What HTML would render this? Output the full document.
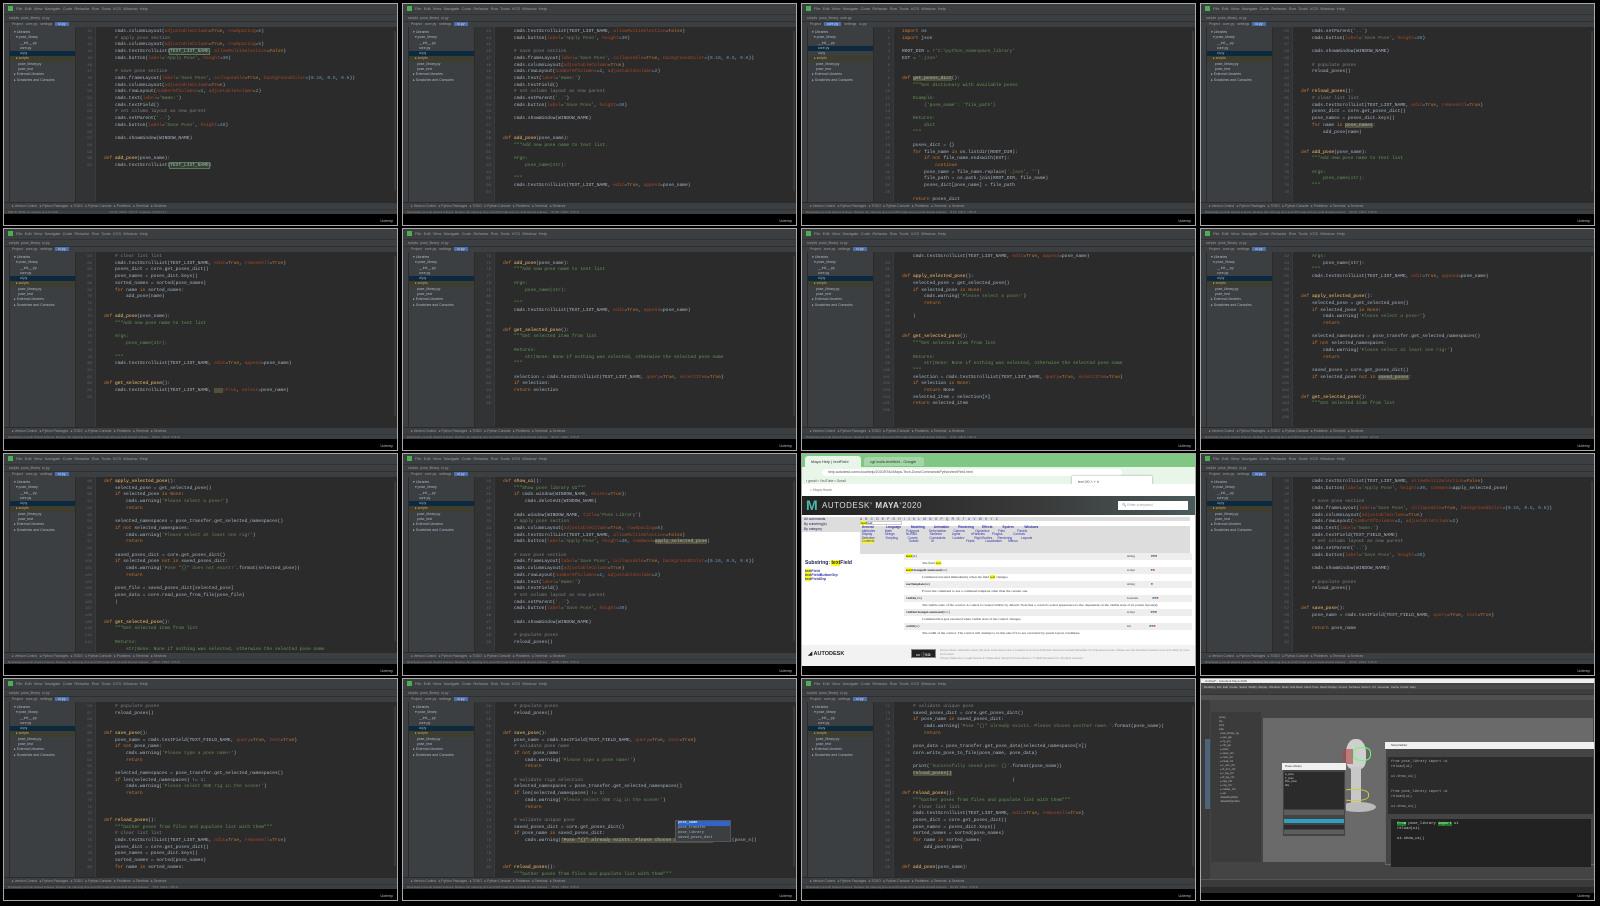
<!DOCTYPE html>
<html><head><meta charset="utf-8">
<style>
*{margin:0;padding:0;box-sizing:border-box}
body{width:1600px;height:906px;background:#000;position:relative;overflow:hidden;font-family:"Liberation Sans",sans-serif}
.c{position:absolute;width:395px;height:223px;border:1px solid #a8a8a8;background:#000;overflow:hidden}
.mb{position:absolute;left:0;top:0;width:100%;height:10px;background:#3c3f41;color:#9a9a9a;font-size:4px;line-height:10px;padding-left:4px;white-space:pre}
.mb b{display:inline-block;width:5px;height:5px;background:#4caf50;margin-right:3px;vertical-align:middle}
.nb{position:absolute;left:0;top:10px;width:100%;height:7px;background:#3c3f41;border-top:1px solid #323232;color:#999;font-size:3.5px;line-height:6px;padding-left:5px;white-space:pre}
.nb i{position:absolute;top:1px;width:4px;height:4px;border-radius:2px}
.tb{position:absolute;left:0;top:17px;width:100%;height:6px;background:#3c3f41;border-top:1px solid #2f2f2f;font-size:3.5px;line-height:5px;color:#999;padding-left:8px;white-space:pre}
.tb span{background:#4b6eaf;color:#ddd;padding:0 3px}
.ls{position:absolute;left:0;top:23px;width:6px;height:175px;background:#3c3f41;border-right:1px solid #2b2b2b}
.pp{position:absolute;left:6px;top:23px;width:66px;height:175px;background:#3c3f41;border-right:1px solid #2b2b2b;font-size:3.5px;line-height:5.3px;color:#a9b7c6;white-space:pre;padding-top:3px}
.pp div{padding-left:4px;height:5.3px}
.pp .sel{background:#0d293e}
.pp .hl{background:#3e3e30;color:#c9a56c}
.gt{position:absolute;left:72px;top:23px;width:20px;height:175px;background:#313335;border-right:1px solid #3a3a3a;color:#606366;font:4px/6.7px "Liberation Mono",monospace;text-align:right;padding-right:3px;padding-top:2px;white-space:pre}
.ed{position:absolute;left:92px;top:23px;width:303px;height:175px;background:#2b2b2b;overflow:hidden}
.ed pre{position:absolute;left:8px;top:2px;font:4.6px/6.7px "Liberation Mono",monospace;color:#a9b7c6}
.ed .sb{position:absolute;right:3px;top:4px;width:2px;height:160px;background:#3a3a3a}
.k{color:#cc7832}.s{color:#6a8759}.f{color:#ffc66d}.m{color:#808080}.p{color:#aa4926}.n{color:#6897bb}.g{background:#344134;color:#a9b7c6;outline:0.5px solid #5a7a5a}.d{color:#629755}.y{background:#52503a}
.bt{position:absolute;left:0;top:198px;width:100%;height:7px;background:#3c3f41;border-top:1px solid #2b2b2b;color:#999;font-size:3.3px;line-height:6px;padding-left:8px;white-space:pre}
.st{position:absolute;left:0;top:205px;width:100%;height:5px;background:#3c3f41;border-top:1px solid #333;color:#888;font-size:3px;line-height:4px;padding-left:4px;white-space:pre}
.ud{position:absolute;right:4px;bottom:2px;color:#bbb;font-size:4px}
</style></head><body>

<!-- ROW 0 -->
<div class="c" style="left:3px;top:3px">
<div class="mb"><b></b>File  Edit  View  Navigate  Code  Refactor  Run  Tools  VCS  Window  Help</div>
<div class="nb">scripts  pose_library  ui.py</div>
<div class="tb">Project   core.py   settings   <span>ui.py</span></div>
<div class="ls"></div>
<div class="pp"><div>▾ Libraries</div><div>  ▾ pose_library</div><div>      __init__.py</div><div>      core.py</div><div class="sel">      ui.py</div><div class="hl">  ▸ scripts</div><div>    pose_library.py</div><div>    pose_test</div><div>▸ External Libraries</div><div>▸ Scratches and Consoles</div></div>
<div class="gt">41
42
43
44
45
46
47
48
49
50
51
52
53
54
55
56
57
58
59
60
61</div>
<div class="ed"><div class="sb"></div><pre>    cmds.columnLayout(<span class="p">adjustableColumn</span>=<span class="k">True</span>, <span class="p">rowSpacing</span>=<span class="n">5</span>)
    <span class="m"># apply pose section</span>
    cmds.columnLayout(<span class="p">adjustableColumn</span>=<span class="k">True</span>, <span class="p">rowSpacing</span>=<span class="n">5</span>)
    cmds.textScrollList(<span class="g">TEXT_LIST_NAME</span>, <span class="p">allowMultiSelection</span>=<span class="k">False</span>)
    cmds.button(<span class="p">label</span>=<span class="s">'Apply Pose'</span>, <span class="p">height</span>=<span class="n">30</span>)

    <span class="m"># save pose section</span>
    cmds.frameLayout(<span class="p">label</span>=<span class="s">'Save Pose'</span>, <span class="p">collapsable</span>=<span class="k">True</span>, <span class="p">backgroundColor</span>=(<span class="n">0.16</span>, <span class="n">0.5</span>, <span class="n">0.6</span>))
    cmds.columnLayout(<span class="p">adjustableColumn</span>=<span class="k">True</span>)
    cmds.rowLayout(<span class="p">numberOfColumns</span>=<span class="n">2</span>, <span class="p">adjustableColumn</span>=<span class="n">2</span>)
    cmds.text(<span class="p">label</span>=<span class="s">'Name:'</span>)
    cmds.textField()
    <span class="m"># set column layout as new parent</span>
    cmds.setParent(<span class="s">'..'</span>)
    cmds.button(<span class="p">label</span>=<span class="s">'Save Pose'</span>, <span class="p">height</span>=<span class="n">30</span>)

    cmds.showWindow(WINDOW_NAME)


<span class="k">def</span> <span class="f">add_pose</span>(pose_name):
    cmds.textScrollList(<span class="g">TEXT_LIST_NAME</span>)</pre></div>
<div class="bt">▸ Version Control   ▸ Python Packages   ▸ TODO   ▸ Python Console   ▸ Problems   ▸ Terminal   ▸ Services</div>
<div class="st">PEP 8: W292 no newline at end of file                                                              61:36  CRLF  UTF-8  4 spaces  Python 3.7</div>
<div class="ud">Udemy</div></div>

<div class="c" style="left:402px;top:3px">
<div class="mb"><b></b>File  Edit  View  Navigate  Code  Refactor  Run  Tools  VCS  Window  Help</div>
<div class="nb">scripts  pose_library  ui.py</div>
<div class="tb">Project   core.py   settings   <span>ui.py</span></div>
<div class="ls"></div>
<div class="pp"><div>▾ Libraries</div><div>  ▾ pose_library</div><div>      __init__.py</div><div>      core.py</div><div class="sel">      ui.py</div><div class="hl">  ▸ scripts</div><div>    pose_library.py</div><div>    pose_test</div><div>▸ External Libraries</div><div>▸ Scratches and Consoles</div></div>
<div class="gt">43
44
45
46
47
48
49
50
51
52
53
54
55
56
57
58
59
60
61
62
63
64
65
66
67</div>
<div class="ed"><div class="sb"></div><pre>    cmds.textScrollList(TEXT_LIST_NAME, <span class="p">allowMultiSelection</span>=<span class="k">False</span>)
    cmds.button(<span class="p">label</span>=<span class="s">'Apply Pose'</span>, <span class="p">height</span>=<span class="n">30</span>)

    <span class="m"># save pose section</span>
    cmds.frameLayout(<span class="p">label</span>=<span class="s">'Save Pose'</span>, <span class="p">collapsable</span>=<span class="k">True</span>, <span class="p">backgroundColor</span>=(<span class="n">0.16</span>, <span class="n">0.5</span>, <span class="n">0.6</span>))
    cmds.columnLayout(<span class="p">adjustableColumn</span>=<span class="k">True</span>)
    cmds.rowLayout(<span class="p">numberOfColumns</span>=<span class="n">2</span>, <span class="p">adjustableColumn</span>=<span class="n">2</span>)
    cmds.text(<span class="p">label</span>=<span class="s">'Name:'</span>)
    cmds.textField()
    <span class="m"># set column layout as new parent</span>
    cmds.setParent(<span class="s">'..'</span>)
    cmds.button(<span class="p">label</span>=<span class="s">'Save Pose'</span>, <span class="p">height</span>=<span class="n">30</span>)

    cmds.showWindow(WINDOW_NAME)


<span class="k">def</span> <span class="f">add_pose</span>(pose_name):
    <span class="d">"""Add new pose name to text list.</span>

<span class="d">    Args:</span>
<span class="d">        pose_name(str):</span>

<span class="d">    """</span>
    cmds.textScrollList(TEXT_LIST_NAME, <span class="p">edit</span>=<span class="k">True</span>, <span class="p">append</span>=pose_name)</pre></div>
<div class="bt">▸ Version Control   ▸ Python Packages   ▸ TODO   ▸ Python Console   ▸ Problems   ▸ Terminal   ▸ Services</div>
<div class="st">Download pre-built shared indexes: Reduce the indexing time and CPU load with pre-built shared indexes     61:36  CRLF  UTF-8</div>
<div class="ud">Udemy</div></div>

<div class="c" style="left:801px;top:3px">
<div class="mb"><b></b>File  Edit  View  Navigate  Code  Refactor  Run  Tools  VCS  Window  Help</div>
<div class="nb">scripts  pose_library  core.py</div>
<div class="tb">Project   <span>core.py</span>   settings   ui.py</div>
<div class="ls"></div>
<div class="pp"><div>▾ Libraries</div><div>  ▾ pose_library</div><div>      __init__.py</div><div class="sel">      core.py</div><div>      ui.py</div><div class="hl">  ▸ scripts</div><div>    pose_library.py</div><div>    pose_test</div><div>▸ External Libraries</div><div>▸ Scratches and Consoles</div></div>
<div class="gt">1
2
3
4
5
6
7
8
9
10
11
12
13
14
15
16
17
18
19
20
21
22
23
24
25</div>
<div class="ed"><div class="sb"></div><pre><span class="k">import</span> os
<span class="k">import</span> json

ROOT_DIR = <span class="s">r'C:\python_namespace_library'</span>
EXT = <span class="s">'.json'</span>


<span class="k">def</span> <span class="y">get_poses_dict</span>():
    <span class="d">"""Get dictionary with available poses</span>

<span class="d">    Example:</span>
<span class="d">        {'pose_name': 'file_path'}</span>

<span class="d">    Returns:</span>
<span class="d">        dict</span>
<span class="d">    """</span>

    poses_dict = {}
    <span class="k">for</span> file_name <span class="k">in</span> os.listdir(ROOT_DIR):
        <span class="k">if not</span> file_name.endswith(EXT):
            <span class="k">continue</span>
        pose_name = file_name.replace(<span class="s">'.json'</span>, <span class="s">''</span>)
        file_path = os.path.join(ROOT_DIR, file_name)
        poses_dict[pose_name] = file_path

    <span class="k">return</span> poses_dict</pre></div>
<div class="bt">▸ Version Control   ▸ Python Packages   ▸ TODO   ▸ Python Console   ▸ Problems   ▸ Terminal   ▸ Services</div>
<div class="st">Download pre-built shared indexes: Reduce the indexing time and CPU load with pre-built shared indexes     8:19  CRLF  UTF-8</div>
<div class="ud">Udemy</div></div>

<div class="c" style="left:1200px;top:3px">
<div class="mb"><b></b>File  Edit  View  Navigate  Code  Refactor  Run  Tools  VCS  Window  Help</div>
<div class="nb">scripts  pose_library  ui.py</div>
<div class="tb">Project   core.py   settings   <span>ui.py</span></div>
<div class="ls"></div>
<div class="pp"><div>▾ Libraries</div><div>  ▾ pose_library</div><div>      __init__.py</div><div>      core.py</div><div class="sel">      ui.py</div><div class="hl">  ▸ scripts</div><div>    pose_library.py</div><div>    pose_test</div><div>▸ External Libraries</div><div>▸ Scratches and Consoles</div></div>
<div class="gt">55
56
57
58
59
60
61
62
63
64
65
66
67
68
69
70
71
72
73
74
75
76
77
78
79</div>
<div class="ed"><div class="sb"></div><pre>    cmds.setParent(<span class="s">'..'</span>)
    cmds.button(<span class="p">label</span>=<span class="s">'Save Pose'</span>, <span class="p">height</span>=<span class="n">30</span>)

    cmds.showWindow(WINDOW_NAME)

    <span class="m"># populate poses</span>
    reload_poses()


<span class="k">def</span> <span class="f">reload_poses</span>():
    <span class="m"># clear list list</span>
    cmds.textScrollList(TEXT_LIST_NAME, <span class="p">edit</span>=<span class="k">True</span>, <span class="p">removeAll</span>=<span class="k">True</span>)
    poses_dict = core.get_poses_dict()
    pose_names = poses_dict.keys()
    <span class="k">for</span> name <span class="k">in</span> <span class="y">pose_names</span>:
        add_pose(name)


<span class="k">def</span> <span class="f">add_pose</span>(pose_name):
    <span class="d">"""Add new pose name to text list</span>

<span class="d">    Args:</span>
<span class="d">        pose_name(str):</span>
<span class="d">    """</span></pre></div>
<div class="bt">▸ Version Control   ▸ Python Packages   ▸ TODO   ▸ Python Console   ▸ Problems   ▸ Terminal   ▸ Services</div>
<div class="st">Download pre-built shared indexes: Reduce the indexing time and CPU load with pre-built shared indexes     69:30  CRLF  UTF-8</div>
<div class="ud">Udemy</div></div>

<!-- ROW 1 -->
<div class="c" style="left:3px;top:228px">
<div class="mb"><b></b>File  Edit  View  Navigate  Code  Refactor  Run  Tools  VCS  Window  Help</div>
<div class="nb">scripts  pose_library  ui.py</div>
<div class="tb">Project   core.py   settings   <span>ui.py</span></div>
<div class="ls"></div>
<div class="pp"><div>▾ Libraries</div><div>  ▾ pose_library</div><div>      __init__.py</div><div>      core.py</div><div class="sel">      ui.py</div><div class="hl">  ▸ scripts</div><div>    pose_library.py</div><div>    pose_test</div><div>▸ External Libraries</div><div>▸ Scratches and Consoles</div></div>
<div class="gt">64
65
66
67
68
69
70
71
72
73
74
75
76
77
78
79
80
81
82
83
84
85</div>
<div class="ed"><div class="sb"></div><pre>    <span class="m"># clear list list</span>
    cmds.textScrollList(TEXT_LIST_NAME, <span class="p">edit</span>=<span class="k">True</span>, <span class="p">removeAll</span>=<span class="k">True</span>)
    poses_dict = core.get_poses_dict()
    pose_names = poses_dict.keys()
    sorted_names = sorted(pose_names)
    <span class="k">for</span> name <span class="k">in</span> sorted_names:
        add_pose(name)


<span class="k">def</span> <span class="f">add_pose</span>(pose_name):
    <span class="d">"""Add new pose name to text list</span>

<span class="d">    Args:</span>
<span class="d">        pose_name(str):</span>

<span class="d">    """</span>
    cmds.textScrollList(TEXT_LIST_NAME, <span class="p">edit</span>=<span class="k">True</span>, <span class="p">append</span>=pose_name)


<span class="k">def</span> <span class="f">get_selected_pose</span>():
    cmds.textScrollList(TEXT_LIST_NAME, <span class="y">   </span><span class="p">=True</span>, <span class="p">select</span>=pose_name)</pre></div>
<div class="bt">▸ Version Control   ▸ Python Packages   ▸ TODO   ▸ Python Console   ▸ Problems   ▸ Terminal   ▸ Services</div>
<div class="st">Download pre-built shared indexes: Reduce the indexing time and CPU load with pre-built shared indexes     85:41  CRLF  UTF-8</div>
<div class="ud">Udemy</div></div>

<div class="c" style="left:402px;top:228px">
<div class="mb"><b></b>File  Edit  View  Navigate  Code  Refactor  Run  Tools  VCS  Window  Help</div>
<div class="nb">scripts  pose_library  ui.py</div>
<div class="tb">Project   core.py   settings   <span>ui.py</span></div>
<div class="ls"></div>
<div class="pp"><div>▾ Libraries</div><div>  ▾ pose_library</div><div>      __init__.py</div><div>      core.py</div><div class="sel">      ui.py</div><div class="hl">  ▸ scripts</div><div>    pose_library.py</div><div>    pose_test</div><div>▸ External Libraries</div><div>▸ Scratches and Consoles</div></div>
<div class="gt">74
75
76
77
78
79
80
81
82
83
84
85
86
87
88
89
90
91
92
93
94
95
96</div>
<div class="ed"><div class="sb"></div><pre>

<span class="k">def</span> <span class="f">add_pose</span>(pose_name):
    <span class="d">"""Add new pose name to text list</span>

<span class="d">    Args:</span>
<span class="d">        pose_name(str):</span>

<span class="d">    """</span>
    cmds.textScrollList(TEXT_LIST_NAME, <span class="p">edit</span>=<span class="k">True</span>, <span class="p">append</span>=pose_name)


<span class="k">def</span> <span class="f">get_selected_pose</span>():
    <span class="d">"""Get selected item from list</span>

<span class="d">    Returns:</span>
<span class="d">        str|None: None if nothing was selected, otherwise the selected pose name</span>
<span class="d">    """</span>

    selection = cmds.textScrollList(TEXT_LIST_NAME, <span class="p">query</span>=<span class="k">True</span>, <span class="p">selectItem</span>=<span class="k">True</span>)
    <span class="k">if</span> selection:
    <span class="k">return</span> selection</pre></div>
<div class="bt">▸ Version Control   ▸ Python Packages   ▸ TODO   ▸ Python Console   ▸ Problems   ▸ Terminal   ▸ Services</div>
<div class="st">Download pre-built shared indexes: Reduce the indexing time and CPU load with pre-built shared indexes     95:17  CRLF  UTF-8</div>
<div class="ud">Udemy</div></div>

<div class="c" style="left:801px;top:228px">
<div class="mb"><b></b>File  Edit  View  Navigate  Code  Refactor  Run  Tools  VCS  Window  Help</div>
<div class="nb">scripts  pose_library  ui.py</div>
<div class="tb">Project   core.py   settings   <span>ui.py</span></div>
<div class="ls"></div>
<div class="pp"><div>▾ Libraries</div><div>  ▾ pose_library</div><div>      __init__.py</div><div>      core.py</div><div class="sel">      ui.py</div><div class="hl">  ▸ scripts</div><div>    pose_library.py</div><div>    pose_test</div><div>▸ External Libraries</div><div>▸ Scratches and Consoles</div></div>
<div class="gt">
84
85
86
87
88
89
90
91
92
93
94
95
96
97
98
99
100
101
102
103
104
105
106</div>
<div class="ed"><div class="sb"></div><pre>
    cmds.textScrollList(TEXT_LIST_NAME, <span class="p">edit</span>=<span class="k">True</span>, <span class="p">append</span>=pose_name)


<span class="k">def</span> <span class="f">apply_selected_pose</span>():
    selected_pose = get_selected_pose()
    <span class="k">if</span> selected_pose <span class="k">is</span> <span class="k">None</span>:
        cmds.warning(<span class="s">'Please select a pose!'</span>)
        <span class="k">return</span>

    |


<span class="k">def</span> <span class="f">get_selected_pose</span>():
    <span class="d">"""Get selected item from list</span>

<span class="d">    Returns:</span>
<span class="d">        str|None: None if nothing was selected, otherwise the selected pose name</span>
<span class="d">    """</span>
    selection = cmds.textScrollList(TEXT_LIST_NAME, <span class="p">query</span>=<span class="k">True</span>, <span class="p">selectItem</span>=<span class="k">True</span>)
    <span class="k">if</span> selection <span class="k">is</span> <span class="k">None</span>:
        <span class="k">return</span> None
    selected_item = selection[<span class="n">0</span>]
    <span class="k">return</span> selected_item</pre></div>
<div class="bt">▸ Version Control   ▸ Python Packages   ▸ TODO   ▸ Python Console   ▸ Problems   ▸ Terminal   ▸ Services</div>
<div class="st">Download pre-built shared indexes: Reduce the indexing time and CPU load with pre-built shared indexes     94:5  CRLF  UTF-8</div>
<div class="ud">Udemy</div></div>

<div class="c" style="left:1200px;top:228px">
<div class="mb"><b></b>File  Edit  View  Navigate  Code  Refactor  Run  Tools  VCS  Window  Help</div>
<div class="nb">scripts  pose_library  ui.py</div>
<div class="tb">Project   core.py   settings   <span>ui.py</span></div>
<div class="ls"></div>
<div class="pp"><div>▾ Libraries</div><div>  ▾ pose_library</div><div>      __init__.py</div><div>      core.py</div><div class="sel">      ui.py</div><div class="hl">  ▸ scripts</div><div>    pose_library.py</div><div>    pose_test</div><div>▸ External Libraries</div><div>▸ Scratches and Consoles</div></div>
<div class="gt">82
83
84
85
86
87
88
89
90
91
92
93
94
95
96
97
98
99
100
101
102
103
104
105
106</div>
<div class="ed"><div class="sb"></div><pre><span class="d">    Args:</span>
        pose_name(str):
<span class="d">    """</span>
    cmds.textScrollList(TEXT_LIST_NAME, <span class="p">edit</span>=<span class="k">True</span>, <span class="p">append</span>=pose_name)


<span class="k">def</span> <span class="f">apply_selected_pose</span>():
    selected_pose = get_selected_pose()
    <span class="k">if</span> selected_pose <span class="k">is</span> <span class="k">None</span>:
        cmds.warning(<span class="s">'Please select a pose!'</span>)
        <span class="k">return</span>

    selected_namespaces = pose_transfer.get_selected_namespaces()
    <span class="k">if not</span> selected_namespaces:
        cmds.warning(<span class="s">'Please select at least one rig!'</span>)
        <span class="k">return</span>

    saved_poses = core.get_poses_dict()
    <span class="k">if</span> selected_pose <span class="k">not in</span> <span class="y">saved_poses</span>:


<span class="k">def</span> <span class="f">get_selected_pose</span>():
    <span class="d">"""Get selected item from list</span></pre></div>
<div class="bt">▸ Version Control   ▸ Python Packages   ▸ TODO   ▸ Python Console   ▸ Problems   ▸ Terminal   ▸ Services</div>
<div class="st">Download pre-built shared indexes: Reduce the indexing time and CPU load with pre-built shared indexes     101:48  CRLF  UTF-8</div>
<div class="ud">Udemy</div></div>

<!-- ROW 2 -->
<div class="c" style="left:3px;top:453px">
<div class="mb"><b></b>File  Edit  View  Navigate  Code  Refactor  Run  Tools  VCS  Window  Help</div>
<div class="nb">scripts  pose_library  ui.py</div>
<div class="tb">Project   core.py   settings   <span>ui.py</span></div>
<div class="ls"></div>
<div class="pp"><div>▾ Libraries</div><div>  ▾ pose_library</div><div>      __init__.py</div><div>      core.py</div><div class="sel">      ui.py</div><div class="hl">  ▸ scripts</div><div>    pose_library.py</div><div>    pose_test</div><div>▸ External Libraries</div><div>▸ Scratches and Consoles</div></div>
<div class="gt">88
89
90
91
92
93
94
95
96
97
98
99
100
101
102
103
104
105
106
107
108
109
110
111
112</div>
<div class="ed"><div class="sb"></div><pre><span class="k">def</span> <span class="f">apply_selected_pose</span>():
    selected_pose = get_selected_pose()
    <span class="k">if</span> selected_pose <span class="k">is</span> <span class="k">None</span>:
        cmds.warning(<span class="s">'Please select a pose!'</span>)
        <span class="k">return</span>

    selected_namespaces = pose_transfer.get_selected_namespaces()
    <span class="k">if not</span> selected_namespaces:
        cmds.warning(<span class="s">'Please select at least one rig!'</span>)
        <span class="k">return</span>

    saved_poses_dict = core.get_poses_dict()
    <span class="k">if</span> selected_pose <span class="k">not in</span> saved_poses_dict:
        cmds.warning(<span class="s">'Pose "{}" does not exist!'</span>.format(selected_pose))
        <span class="k">return</span>

    pose_file = saved_poses_dict[selected_pose]
    pose_data = core.read_pose_from_file(pose_file)
    |


<span class="k">def</span> <span class="f">get_selected_pose</span>():
    <span class="d">"""Get selected item from list</span>

<span class="d">    Returns:</span>
<span class="d">        str|None: None if nothing was selected, otherwise the selected pose name</span></pre></div>
<div class="bt">▸ Version Control   ▸ Python Packages   ▸ TODO   ▸ Python Console   ▸ Problems   ▸ Terminal   ▸ Services</div>
<div class="st">Download pre-built shared indexes: Reduce the indexing time and CPU load with pre-built shared indexes     106:5  CRLF  UTF-8</div>
<div class="ud">Udemy</div></div>

<div class="c" style="left:402px;top:453px">
<div class="mb"><b></b>File  Edit  View  Navigate  Code  Refactor  Run  Tools  VCS  Window  Help</div>
<div class="nb">scripts  pose_library  ui.py</div>
<div class="tb">Project   core.py   settings   <span>ui.py</span></div>
<div class="ls"></div>
<div class="pp"><div>▾ Libraries</div><div>  ▾ pose_library</div><div>      __init__.py</div><div>      core.py</div><div class="sel">      ui.py</div><div class="hl">  ▸ scripts</div><div>    pose_library.py</div><div>    pose_test</div><div>▸ External Libraries</div><div>▸ Scratches and Consoles</div></div>
<div class="gt">26
27
28
29
30
31
32
33
34
35
36
37
38
39
40
41
42
43
44
45
46
47
48
49
50</div>
<div class="ed"><div class="sb"></div><pre><span class="k">def</span> <span class="f">show_ui</span>():
    <span class="d">"""Show pose library UI"""</span>
    <span class="k">if</span> cmds.window(WINDOW_NAME, <span class="p">exists</span>=<span class="k">True</span>):
        cmds.deleteUI(WINDOW_NAME)

    cmds.window(WINDOW_NAME, <span class="p">title</span>=<span class="s">'Pose Library'</span>)
    <span class="m"># apply pose section</span>
    cmds.columnLayout(<span class="p">adjustableColumn</span>=<span class="k">True</span>, <span class="p">rowSpacing</span>=<span class="n">5</span>)
    cmds.textScrollList(TEXT_LIST_NAME, <span class="p">allowMultiSelection</span>=<span class="k">False</span>)
    cmds.button(<span class="p">label</span>=<span class="s">'Apply Pose'</span>, <span class="p">height</span>=<span class="n">30</span>, <span class="p">command</span>=<span class="y">apply_selected_pose</span>)

    <span class="m"># save pose section</span>
    cmds.frameLayout(<span class="p">label</span>=<span class="s">'Save Pose'</span>, <span class="p">collapsable</span>=<span class="k">True</span>, <span class="p">backgroundColor</span>=(<span class="n">0.16</span>, <span class="n">0.5</span>, <span class="n">0.6</span>))
    cmds.columnLayout(<span class="p">adjustableColumn</span>=<span class="k">True</span>)
    cmds.rowLayout(<span class="p">numberOfColumns</span>=<span class="n">2</span>, <span class="p">adjustableColumn</span>=<span class="n">2</span>)
    cmds.text(<span class="p">label</span>=<span class="s">'Name:'</span>)
    cmds.textField()
    <span class="m"># set column layout as new parent</span>
    cmds.setParent(<span class="s">'..'</span>)
    cmds.button(<span class="p">label</span>=<span class="s">'Save Pose'</span>, <span class="p">height</span>=<span class="n">30</span>)

    cmds.showWindow(WINDOW_NAME)

    <span class="m"># populate poses</span>
    reload_poses()</pre></div>
<div class="bt">▸ Version Control   ▸ Python Packages   ▸ TODO   ▸ Python Console   ▸ Problems   ▸ Terminal   ▸ Services</div>
<div class="st">Download pre-built shared indexes: Reduce the indexing time and CPU load with pre-built shared indexes     35:99  CRLF  UTF-8</div>
<div class="ud">Udemy</div></div>

<!-- Browser cell -->
<div class="c" style="left:801px;top:453px;background:#fff">
<div style="position:absolute;left:0;top:0;width:100%;height:13px;background:#81c784"></div>
<div style="position:absolute;left:3px;top:2px;width:56px;height:11px;background:#e8f5e9;border-radius:3px 3px 0 0;font-size:4px;line-height:11px;padding-left:6px;color:#333">Maya Help | textField</div>
<div style="position:absolute;left:62px;top:3px;width:60px;height:9px;background:#a5d6a7;border-radius:3px 3px 0 0;font-size:4px;line-height:9px;padding-left:6px;color:#333">cgf.tools.textfield - Google Search</div>
<div style="position:absolute;left:0;top:13px;width:100%;height:11px;background:#e8f5e9"></div>
<div style="position:absolute;left:20px;top:15px;width:300px;height:7px;background:#fff;border-radius:4px;font-size:3.6px;line-height:7px;padding-left:6px;color:#555">help.autodesk.com/cloudhelp/2020/ENU/Maya-Tech-Docs/CommandsPython/textField.html</div>
<div style="position:absolute;left:0;top:24px;width:100%;height:6px;background:#e8f5e9;font-size:3.5px;line-height:6px;padding-left:4px;color:#555">▪ gmail   ▪ YouTube   ▪ Gmail</div>
<div style="position:absolute;left:270px;top:22px;width:80px;height:12px;background:#fff;box-shadow:0 0 2px #999;font-size:3.5px;line-height:12px;padding-left:6px;color:#555">text                 0/0    ˄ ˅ ✕</div>
<div style="position:absolute;left:0;top:30px;width:100%;height:12px;background:#fff;font-size:3.5px;line-height:12px;padding-left:8px;color:#777">⌂ Maya Home</div>
<div style="position:absolute;left:0;top:42px;width:100%;height:19px;background:linear-gradient(90deg,#222 0%,#3a3a3a 60%,#4a5a5a 100%)"></div>
<div style="position:absolute;left:4px;top:44px;font:bold 14px/15px 'Liberation Sans',sans-serif;color:#4db6ac">M</div>
<div style="position:absolute;left:20px;top:47px;font-size:8px;color:#ddd;letter-spacing:0.5px">AUTODESK<sup style="font-size:3px">®</sup> <b>MAYA</b><sup style="font-size:3px">®</sup>2020</div>
<div style="position:absolute;left:316px;top:47px;width:70px;height:9px;background:#fff;font-size:3.5px;line-height:9px;padding-left:4px;color:#999">🔍 Enter a keyword</div>
<div style="position:absolute;left:0;top:61px;width:100%;height:60px;background:#fff"></div>
<div style="position:absolute;left:0;top:63px;width:58px;font-size:3.4px;line-height:5px;color:#225;padding-left:2px;background:#ddd">All commands<br>By substring(s)<br>By category</div>
<div style="position:absolute;left:58px;top:63px;width:330px;height:4px;background:#ddd;font-size:3.2px;line-height:4px;color:#33a;letter-spacing:1.2px">A B C D E F G H I J K L M N O P Q R S T U V W X Y Z</div>
<div style="position:absolute;left:58px;top:67px;width:42px;height:4px;background:#fff;border:0.5px solid #ccc;font-size:3px;line-height:3px"><span style="background:#ff0">text</span>Field</div>
<div style="position:absolute;left:58px;top:72px;width:330px;height:28px;background:#ddd;font-size:3.2px;line-height:3.6px;color:#33a;white-space:pre">  <b>General</b>              <b>Language</b>           <b>Modeling</b>          <b>Animation</b>          <b>Rendering</b>         <b>Effects</b>           <b>System</b>            <b>Windows</b>
  Attributes           Math                Polygons           Deformation        Camera            Dynamics          Files              Panels
  Display              Strings             NURBS              Skeleton           Lights            nParticles        Plugins            Controls
  Selection            Scripting           Curves             Constraints        Lookdev           Rigid Bodies      Rendering          Layouts
  <span style="background:#ff0">Contexts</span>                                       Subdiv              IK                                    Fluids            Localization       Menus</div>
<div style="position:absolute;left:3px;top:106px;font-size:5px;font-weight:bold;color:#225">Substring: <span style="background:#ff0">text</span>Field</div>
<div style="position:absolute;left:3px;top:115px;font-size:3.6px;line-height:4.2px;color:#33a;font-weight:bold"><span style="background:#ff0">text</span>Field<br><span style="background:#ff0">text</span>FieldButtonGrp<br><span style="background:#ff0">text</span>FieldGrp</div>
<div style="position:absolute;left:102px;top:99px;width:288px;font-family:'Liberation Serif',serif;font-size:3.5px;line-height:7px;color:#333">
<div style="background:#eee;padding-left:2px"><b style="background:#ff0">text</b>(tx)                                                                                                          <span style="float:right;width:65px">string &nbsp;&nbsp;&nbsp;&nbsp;&nbsp;&nbsp;&nbsp;&nbsp;&nbsp;&nbsp;&nbsp;&nbsp;&nbsp;&nbsp;&nbsp;&nbsp; <span style="color:#58a">■■</span><span style="color:#c55">■</span></span></div>
<div style="padding-left:18px">The field <span style="background:#ff0">text</span>.</div>
<div style="background:#eee;padding-left:2px"><b><span style="background:#ff0">text</span>ChangedCommand</b>(tcc)<span style="float:right;width:65px">script &nbsp;&nbsp;&nbsp;&nbsp;&nbsp;&nbsp;&nbsp;&nbsp;&nbsp;&nbsp;&nbsp;&nbsp;&nbsp;&nbsp;&nbsp;&nbsp; <span style="color:#58a">■</span><span style="color:#c55">■</span></span></div>
<div style="padding-left:18px">Command executed immediately when the field <span style="background:#ff0">text</span> changes.</div>
<div style="background:#eee;padding-left:2px"><b>useTemplate</b>(ut)<span style="float:right;width:65px">string &nbsp;&nbsp;&nbsp;&nbsp;&nbsp;&nbsp;&nbsp;&nbsp;&nbsp;&nbsp;&nbsp;&nbsp;&nbsp;&nbsp;&nbsp;&nbsp; <span style="color:#58a">■</span></span></div>
<div style="padding-left:18px">Forces the command to use a command template other than the current one.</div>
<div style="background:#eee;padding-left:2px"><b>visible</b>(vis)<span style="float:right;width:65px">boolean &nbsp;&nbsp;&nbsp;&nbsp;&nbsp;&nbsp;&nbsp;&nbsp;&nbsp;&nbsp;&nbsp;&nbsp;&nbsp;&nbsp; <span style="color:#58a">■■</span><span style="color:#c55">■</span></span></div>
<div style="padding-left:18px">The visible state of the control. A control is created visible by default. Note that a control's actual appearance is also dependent on the visible state of its parent layout(s).</div>
<div style="background:#eee;padding-left:2px"><b>visibleChangeCommand</b>(vcc)<span style="float:right;width:65px">script &nbsp;&nbsp;&nbsp;&nbsp;&nbsp;&nbsp;&nbsp;&nbsp;&nbsp;&nbsp;&nbsp;&nbsp;&nbsp;&nbsp;&nbsp;&nbsp; <span style="color:#58a">■■</span><span style="color:#c55">■</span></span></div>
<div style="padding-left:18px">Command that gets executed when visible state of the control changes.</div>
<div style="background:#eee;padding-left:2px"><b>width</b>(w)<span style="float:right;width:65px">int &nbsp;&nbsp;&nbsp;&nbsp;&nbsp;&nbsp;&nbsp;&nbsp;&nbsp;&nbsp;&nbsp;&nbsp;&nbsp;&nbsp;&nbsp;&nbsp;&nbsp;&nbsp;&nbsp; <span style="color:#58a">■■</span><span style="color:#c55">■</span></span></div>
<div style="padding-left:18px">The width of the control. The control will attempt to be this size if it is not overruled by parent layout conditions.</div>
</div>
<div style="position:absolute;left:0;top:191px;width:100%;height:21px;background:#f2f2f2"></div>
<div style="position:absolute;left:6px;top:197px;font-size:5.5px;font-weight:bold;color:#222">◢ AUTODESK</div>
<div style="position:absolute;left:109px;top:195px;width:25px;height:9px;background:#222;border:0.5px solid #888;color:#fff;font-size:4px;line-height:9px;text-align:center">cc ⓘ$⊜</div>
<div style="position:absolute;left:138px;top:194px;width:250px;font-size:2.8px;line-height:4px;color:#999">Except where otherwise noted, this work is licensed under a Creative Commons Attribution-NonCommercial-ShareAlike 3.0 Unported License. Please see the Autodesk Creative Commons FAQ for more information.<br>Privacy Statement | Legal Notices &amp; Trademarks | Report Noncompliance | © 2020 Autodesk Inc. All rights reserved</div>
<div style="position:absolute;left:0;top:212px;width:100%;height:11px;background:#000"></div>
</div>

<div class="c" style="left:1200px;top:453px">
<div class="mb"><b></b>File  Edit  View  Navigate  Code  Refactor  Run  Tools  VCS  Window  Help</div>
<div class="nb">scripts  pose_library  ui.py</div>
<div class="tb">Project   core.py   settings   <span>ui.py</span></div>
<div class="ls"></div>
<div class="pp"><div>▾ Libraries</div><div>  ▾ pose_library</div><div>      __init__.py</div><div>      core.py</div><div class="sel">      ui.py</div><div class="hl">  ▸ scripts</div><div>    pose_library.py</div><div>    pose_test</div><div>▸ External Libraries</div><div>▸ Scratches and Consoles</div></div>
<div class="gt">38
39
40
41
42
43
44
45
46
47
48
49
50
51
52
53
54
55
56
57
58
59
60
61
62</div>
<div class="ed"><div class="sb"></div><pre>    cmds.textScrollList(TEXT_LIST_NAME, <span class="p">allowMultiSelection</span>=<span class="k">False</span>)
    cmds.button(<span class="p">label</span>=<span class="s">'Apply Pose'</span>, <span class="p">height</span>=<span class="n">30</span>, <span class="p">command</span>=apply_selected_pose)

    <span class="m"># save pose section</span>
    cmds.frameLayout(<span class="p">label</span>=<span class="s">'Save Pose'</span>, <span class="p">collapsable</span>=<span class="k">True</span>, <span class="p">backgroundColor</span>=(<span class="n">0.16</span>, <span class="n">0.5</span>, <span class="n">0.6</span>))
    cmds.columnLayout(<span class="p">adjustableColumn</span>=<span class="k">True</span>)
    cmds.rowLayout(<span class="p">numberOfColumns</span>=<span class="n">2</span>, <span class="p">adjustableColumn</span>=<span class="n">2</span>)
    cmds.text(<span class="p">label</span>=<span class="s">'Name:'</span>)
    cmds.textField(TEXT_FIELD_NAME)
    <span class="m"># set column layout as new parent</span>
    cmds.setParent(<span class="s">'..'</span>)
    cmds.button(<span class="p">label</span>=<span class="s">'Save Pose'</span>, <span class="p">height</span>=<span class="n">30</span>)

    cmds.showWindow(WINDOW_NAME)

    <span class="m"># populate poses</span>
    reload_poses()


<span class="k">def</span> <span class="f">save_pose</span>():
    pose_name = cmds.textField(TEXT_FIELD_NAME, <span class="p">query</span>=<span class="k">True</span>, <span class="p">text</span>=<span class="k">True</span>)

    <span class="k">return</span> pose_name</pre></div>
<div class="bt">▸ Version Control   ▸ Python Packages   ▸ TODO   ▸ Python Console   ▸ Problems   ▸ Terminal   ▸ Services</div>
<div class="st">Download pre-built shared indexes: Reduce the indexing time and CPU load with pre-built shared indexes     60:22  CRLF  UTF-8</div>
<div class="ud">Udemy</div></div>

<!-- ROW 3 -->
<div class="c" style="left:3px;top:678px">
<div class="mb"><b></b>File  Edit  View  Navigate  Code  Refactor  Run  Tools  VCS  Window  Help</div>
<div class="nb">scripts  pose_library  ui.py</div>
<div class="tb">Project   core.py   settings   <span>ui.py</span></div>
<div class="ls"></div>
<div class="pp"><div>▾ Libraries</div><div>  ▾ pose_library</div><div>      __init__.py</div><div>      core.py</div><div class="sel">      ui.py</div><div class="hl">  ▸ scripts</div><div>    pose_library.py</div><div>    pose_test</div><div>▸ External Libraries</div><div>▸ Scratches and Consoles</div></div>
<div class="gt">56
57
58
59
60
61
62
63
64
65
66
67
68
69
70
71
72
73
74
75
76
77
78
79
80</div>
<div class="ed"><div class="sb"></div><pre>    <span class="m"># populate poses</span>
    reload_poses()


<span class="k">def</span> <span class="f">save_pose</span>():
    pose_name = cmds.textField(TEXT_FIELD_NAME, <span class="p">query</span>=<span class="k">True</span>, <span class="p">text</span>=<span class="k">True</span>)
    <span class="k">if not</span> pose_name:
        cmds.warning(<span class="s">'Please type a pose name!'</span>)
        <span class="k">return</span>

    selected_namespaces = pose_transfer.get_selected_namespaces()
    <span class="k">if</span> len(selected_namespaces) != <span class="n">1</span>:
        cmds.warning(<span class="s">'Please select ONE rig in the scene!'</span>)
        <span class="k">return</span>



<span class="k">def</span> <span class="f">reload_poses</span>():
    <span class="d">"""Gather poses from files and populate list with them"""</span>
    <span class="m"># clear list list</span>
    cmds.textScrollList(TEXT_LIST_NAME, <span class="p">edit</span>=<span class="k">True</span>, <span class="p">removeAll</span>=<span class="k">True</span>)
    poses_dict = core.get_poses_dict()
    pose_names = poses_dict.keys()
    sorted_names = sorted(pose_names)
    <span class="k">for</span> name <span class="k">in</span> sorted_names:</pre></div>
<div class="bt">▸ Version Control   ▸ Python Packages   ▸ TODO   ▸ Python Console   ▸ Problems   ▸ Terminal   ▸ Services</div>
<div class="st">Download pre-built shared indexes: Reduce the indexing time and CPU load with pre-built shared indexes     70:5  CRLF  UTF-8</div>
<div class="ud">Udemy</div></div>

<div class="c" style="left:402px;top:678px">
<div class="mb"><b></b>File  Edit  View  Navigate  Code  Refactor  Run  Tools  VCS  Window  Help</div>
<div class="nb">scripts  pose_library  ui.py</div>
<div class="tb">Project   core.py   settings   <span>ui.py</span></div>
<div class="ls"></div>
<div class="pp"><div>▾ Libraries</div><div>  ▾ pose_library</div><div>      __init__.py</div><div>      core.py</div><div class="sel">      ui.py</div><div class="hl">  ▸ scripts</div><div>    pose_library.py</div><div>    pose_test</div><div>▸ External Libraries</div><div>▸ Scratches and Consoles</div></div>
<div class="gt">56
57
58
59
60
61
62
63
64
65
66
67
68
69
70
71
72
73
74
75
76
77
78
79
80</div>
<div class="ed"><div class="sb"></div><pre>    <span class="m"># populate poses</span>
    reload_poses()


<span class="k">def</span> <span class="f">save_pose</span>():
    pose_name = cmds.textField(TEXT_FIELD_NAME, <span class="p">query</span>=<span class="k">True</span>, <span class="p">text</span>=<span class="k">True</span>)
    <span class="m"># validate pose name</span>
    <span class="k">if not</span> pose_name:
        cmds.warning(<span class="s">'Please type a pose name!'</span>)
        <span class="k">return</span>

    <span class="m"># validate rigs selection</span>
    selected_namespaces = pose_transfer.get_selected_namespaces()
    <span class="k">if</span> len(selected_namespaces) != <span class="n">1</span>:
        cmds.warning(<span class="s">'Please select ONE rig in the scene!'</span>)
        <span class="k">return</span>

    <span class="m"># validate unique pose</span>
    saved_poses_dict = core.get_poses_dict()
    <span class="k">if</span> pose_name <span class="k">in</span> saved_poses_dict:
        cmds.warning(<span class="y">'Pose "{}" already exists. Please choose another name.'</span>.format(pose_n))



<span class="k">def</span> <span class="f">reload_poses</span>():
    <span class="d">"""Gather poses from files and populate list with them"""</span></pre>
<div style="position:absolute;left:180px;top:118px;width:56px;height:22px;background:#3c3f41;border:0.5px solid #555;font:3.6px/5px 'Liberation Mono',monospace;color:#a9b7c6;padding-left:2px"><div style="background:#2f65ca;color:#fff">pose_name</div>pose_transfer<br>pose_library<br>saved_poses_dict</div></div>
<div class="bt">▸ Version Control   ▸ Python Packages   ▸ TODO   ▸ Python Console   ▸ Problems   ▸ Terminal   ▸ Services</div>
<div class="st">Download pre-built shared indexes: Reduce the indexing time and CPU load with pre-built shared indexes     75:91  CRLF  UTF-8</div>
<div class="ud">Udemy</div></div>

<div class="c" style="left:801px;top:678px">
<div class="mb"><b></b>File  Edit  View  Navigate  Code  Refactor  Run  Tools  VCS  Window  Help</div>
<div class="nb">scripts  pose_library  ui.py</div>
<div class="tb">Project   core.py   settings   <span>ui.py</span></div>
<div class="ls"></div>
<div class="pp"><div>▾ Libraries</div><div>  ▾ pose_library</div><div>      __init__.py</div><div>      core.py</div><div class="sel">      ui.py</div><div class="hl">  ▸ scripts</div><div>    pose_library.py</div><div>    pose_test</div><div>▸ External Libraries</div><div>▸ Scratches and Consoles</div></div>
<div class="gt">72
73
74
75
76
77
78
79
80
81
82
83
84
85
86
87
88
89
90
91
92
93
94
95
96</div>
<div class="ed"><div class="sb"></div><pre>    <span class="m"># validate unique pose</span>
    saved_poses_dict = core.get_poses_dict()
    <span class="k">if</span> pose_name <span class="k">in</span> saved_poses_dict:
        cmds.warning(<span class="s">'Pose "{}" already exists. Please choose another name.'</span>.format(pose_name))
        <span class="k">return</span>

    pose_data = pose_transfer.get_pose_data(selected_namespaces[<span class="n">0</span>])
    core.write_pose_to_file(pose_name, pose_data)

    print(<span class="s">'Successfully saved pose: {}'</span>.format(pose_name))
    <span class="y">reload_poses()</span>
                                        |

<span class="k">def</span> <span class="f">reload_poses</span>():
    <span class="d">"""Gather poses from files and populate list with them"""</span>
    <span class="m"># clear list list</span>
    cmds.textScrollList(TEXT_LIST_NAME, <span class="p">edit</span>=<span class="k">True</span>, <span class="p">removeAll</span>=<span class="k">True</span>)
    poses_dict = core.get_poses_dict()
    pose_names = poses_dict.keys()
    sorted_names = sorted(pose_names)
    <span class="k">for</span> name <span class="k">in</span> sorted_names:
        add_pose(name)


<span class="k">def</span> <span class="f">add_pose</span>(pose_name):</pre></div>
<div class="bt">▸ Version Control   ▸ Python Packages   ▸ TODO   ▸ Python Console   ▸ Problems   ▸ Terminal   ▸ Services</div>
<div class="st">Download pre-built shared indexes: Reduce the indexing time and CPU load with pre-built shared indexes     83:19  CRLF  UTF-8</div>
<div class="ud">Udemy</div></div>

<!-- Maya cell -->
<div class="c" style="left:1200px;top:678px;background:#000">
<div style="position:absolute;left:0;top:0;width:100%;height:4px;background:#eee;font-size:3px;line-height:4px;padding-left:4px;color:#444">Untitled* - Autodesk Maya 2020</div>
<div style="position:absolute;left:0;top:4px;width:100%;height:196px;background:#444"></div>
<div style="position:absolute;left:0;top:6px;width:100%;height:4px;background:#4a4a4a;font-size:2.8px;line-height:4px;color:#ccc;padding-left:3px;white-space:pre">Modeling  File  Edit  Create  Select  Modify  Display  Windows  Mesh  Edit Mesh  Mesh Tools  Mesh Display  Curves  Surfaces  Deform  UV  Generate  Cache  Arnold  Help</div>
<div style="position:absolute;left:0;top:10px;width:100%;height:6px;background:#3e3e3e;border-bottom:1px solid #333"></div>
<div style="position:absolute;left:0;top:16px;width:100%;height:5px;background:#505050"></div>
<div style="position:absolute;left:0;top:21px;width:9px;height:180px;background:#3a3a3a"></div>
<div style="position:absolute;left:4px;top:60px;width:5px;height:70px;background:#5a7ea5;opacity:0.6"></div>
<div style="position:absolute;left:10px;top:33px;width:50px;height:150px;background:#3b3b3b;font-size:2.6px;line-height:4px;color:#bbb;padding:4px 0 0 8px;white-space:pre">persp
top
front
side
  pose_library_rig
  ▸ geo_grp
  ▸ rig_grp
  ▸ ctrl_grp
  ▸ joints
  ▸ spine_ctrl
  ▸ neck_ctrl
  ▸ head_ctrl
  ▸ L_arm_ctrl
  ▸ R_arm_ctrl
  ▸ L_leg_ctrl
  ▸ R_leg_ctrl
  ▸ hips_ctrl
  ▸ cog_ctrl
  ▸ master_ctrl
  ▸ set
  defaultLightSet
  defaultObjectSet</div>
<div style="position:absolute;left:62px;top:33px;width:330px;height:150px;background:#6a6a6a"></div>
<div style="position:absolute;left:62px;top:33px;width:330px;height:6px;background:#444"></div>
<div style="position:absolute;left:145px;top:60px;width:20px;height:30px;border-radius:45% 45% 30% 30%;background:#cfcfcf"></div>
<div style="position:absolute;left:150px;top:88px;width:10px;height:40px;background:#c8c8c8"></div>
<div style="position:absolute;left:140px;top:123px;width:35px;height:10px;border-radius:50%;background:#bbb"></div>
<div style="position:absolute;left:152px;top:68px;width:18px;height:14px;border:1px solid #6f6;border-radius:40%"></div>
<div style="position:absolute;left:142px;top:70px;width:10px;height:15px;background:#a44;opacity:0.6"></div>
<div style="position:absolute;left:138px;top:110px;width:30px;height:12px;border:1px solid #cc4;border-radius:40%"></div>
<div style="position:absolute;left:81px;top:84px;width:64px;height:74px;background:#444;border:0.5px solid #666"></div>
<div style="position:absolute;left:81px;top:84px;width:64px;height:7px;background:#f0f0f0;font-size:3px;line-height:7px;padding-left:3px;color:#333">Pose Library</div>
<div style="position:absolute;left:83px;top:93px;width:60px;height:37px;background:#2b2b2b;font-size:2.6px;line-height:3.5px;color:#ccc;padding:1px">A_pose<br>T_pose<br>Run_pose<br>Idle</div>
<div style="position:absolute;left:83px;top:131px;width:60px;height:5px;background:#5d5d5d"></div>
<div style="position:absolute;left:83px;top:140px;width:60px;height:4px;background:#2fa0c0"></div>
<div style="position:absolute;left:83px;top:146px;width:60px;height:4px;background:#2b2b2b"></div>
<div style="position:absolute;left:83px;top:151px;width:60px;height:4px;background:#5d5d5d"></div>
<div style="position:absolute;left:184px;top:63px;width:210px;height:123px;background:#444;border:0.5px solid #666"></div>
<div style="position:absolute;left:184px;top:63px;width:210px;height:7px;background:#f0f0f0;font-size:3px;line-height:7px;padding-left:6px;color:#333">Script Editor</div>
<div style="position:absolute;left:187px;top:78px;width:205px;height:57px;background:#2b2b2b;font:3.5px/5px 'Liberation Mono',monospace;color:#aaa;padding:3px 3px;white-space:pre">from pose_library import ui
reload(ui)

ui.show_ui()


from pose_library import ui
reload(ui)

ui.show_ui()</div>
<div style="position:absolute;left:190px;top:140px;width:200px;height:48px;background:#222;font:3.8px/5px 'Liberation Mono',monospace;color:#ccc;padding:3px 6px;white-space:pre"><span style="background:#1a7a2a;color:#cfc">from</span> pose_library <span style="background:#1a7a2a;color:#cfc">import</span> ui
reload(ui)

ui.show_ui()</div>
<div style="position:absolute;left:25px;top:205px;width:370px;height:1px;background:#888"></div>
<div style="position:absolute;left:0;top:200px;width:100%;height:8px;background:#3a3a3a;border-top:1px solid #555"></div>
<div style="position:absolute;left:0;top:208px;width:100%;height:6px;background:#2a2a2a"></div>
<div class="ud">Udemy</div>
</div>

</body></html>
